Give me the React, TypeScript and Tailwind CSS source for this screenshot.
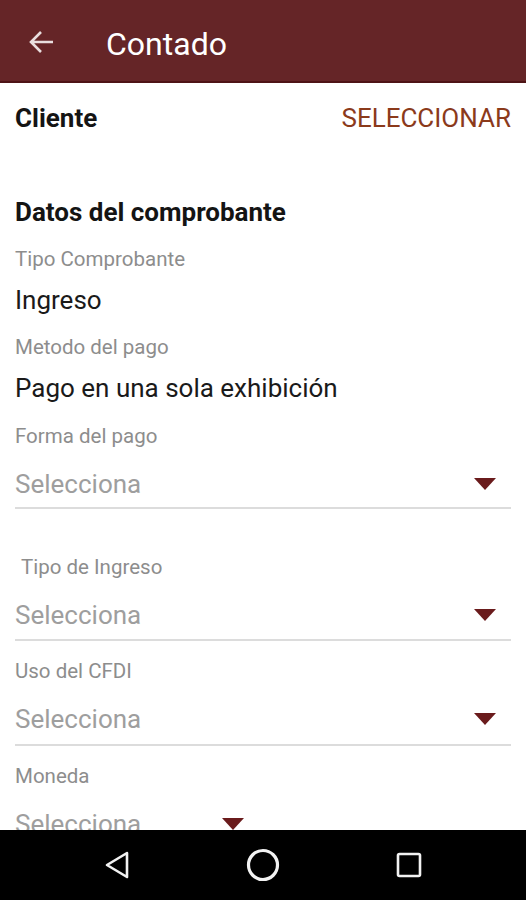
import React from "react";

const Caret = () => (
  <svg width="22" height="13" viewBox="0 0 22 13" className="shrink-0">
    <path d="M0 0 L22 0 L11 12 Z" fill="#6a1b1c" />
  </svg>
);

const Label = ({ children, className = "" }: { children: React.ReactNode; className?: string }) => (
  <div className={"text-[20.5px] leading-[24px] text-[#8d8d8d] " + className}>{children}</div>
);

const Value = ({ children, className = "" }: { children: React.ReactNode; className?: string }) => (
  <div className={"text-[26px] leading-[30px] text-[#1a1a1a] " + className}>{children}</div>
);

const Select = ({
  className = "",
  lineClass = "",
  line = true,
  caretLeft = false,
}: {
  className?: string;
  lineClass?: string;
  line?: boolean;
  caretLeft?: boolean;
}) => (
  <div className={className}>
    <div className={"flex items-center h-[30px] " + (caretLeft ? "gap-[81px]" : "justify-between pr-[15px]")}>
      <span className="text-[26px] leading-[30px] text-[#9e9e9e]">Selecciona</span>
      <Caret />
    </div>
    {line && <div className={"h-[2px] bg-[#dcdcdc] " + lineClass} />}
  </div>
);

export default function App() {
  return (
    <div
      className="w-[526px] h-[900px] flex flex-col bg-white overflow-hidden"
      style={{ fontFamily: "Roboto, 'Noto Sans', sans-serif" }}
    >
      <header className="h-[83px] shrink-0 bg-[#652527] border-b-[2px] border-[#4e1416] flex items-center pt-[3px]">
        <svg width="26" height="24" viewBox="0 0 26 24" className="ml-[28px]">
          <path d="M25 12 H3 M13 2 L3 12 L13 22" fill="none" stroke="#e9dede" strokeWidth="2.6" />
        </svg>
        <h1 className="ml-[52px] mt-[3px] text-[32px] text-white leading-none">Contado</h1>
      </header>

      <main className="flex-1 overflow-hidden pl-[15px] pr-[15px]">
        <div className="h-[70px] flex items-center justify-between">
          <span className="text-[26px] font-bold text-[#141414]">Cliente</span>
          <span className="text-[26px] text-[#8b3a1b]">SELECCIONAR</span>
        </div>

        <div className="mt-[44px] text-[26px] leading-[30px] font-bold text-[#141414]">Datos del comprobante</div>
        <Label className="mt-[20px]">Tipo Comprobante</Label>
        <Value className="mt-[14px]">Ingreso</Value>
        <Label className="mt-[20px]">Metodo del pago</Label>
        <Value className="mt-[14px]">Pago en una sola exhibición</Value>
        <Label className="mt-[21px]">Forma del pago</Label>
        <Select className="mt-[21px]" lineClass="mt-[8px]" />

        <Label className="mt-[46px] pl-[6px]">Tipo de Ingreso</Label>
        <Select className="mt-[21px]" lineClass="mt-[9px]" />

        <Label className="mt-[18px]">Uso del CFDI</Label>
        <Select className="mt-[21px]" lineClass="mt-[10px]" />

        <Label className="mt-[18px]">Moneda</Label>
        <Select className="mt-[21px]" line={false} caretLeft />
      </main>

      <nav className="h-[70px] shrink-0 bg-black flex items-center justify-between px-[104px]">
        <svg width="26" height="30" viewBox="0 0 26 30">
          <path d="M23 3 L3 15 L23 27 Z" fill="none" stroke="#f2f2f2" strokeWidth="2.6" strokeLinejoin="round" />
        </svg>
        <svg width="36" height="36" viewBox="0 0 36 36">
          <circle cx="18" cy="18" r="14.5" fill="none" stroke="#f2f2f2" strokeWidth="3.2" />
        </svg>
        <svg width="26" height="26" viewBox="0 0 26 26">
          <rect x="2" y="2" width="22" height="22" rx="1.5" fill="none" stroke="#f2f2f2" strokeWidth="2.6" />
        </svg>
      </nav>
    </div>
  );
}
